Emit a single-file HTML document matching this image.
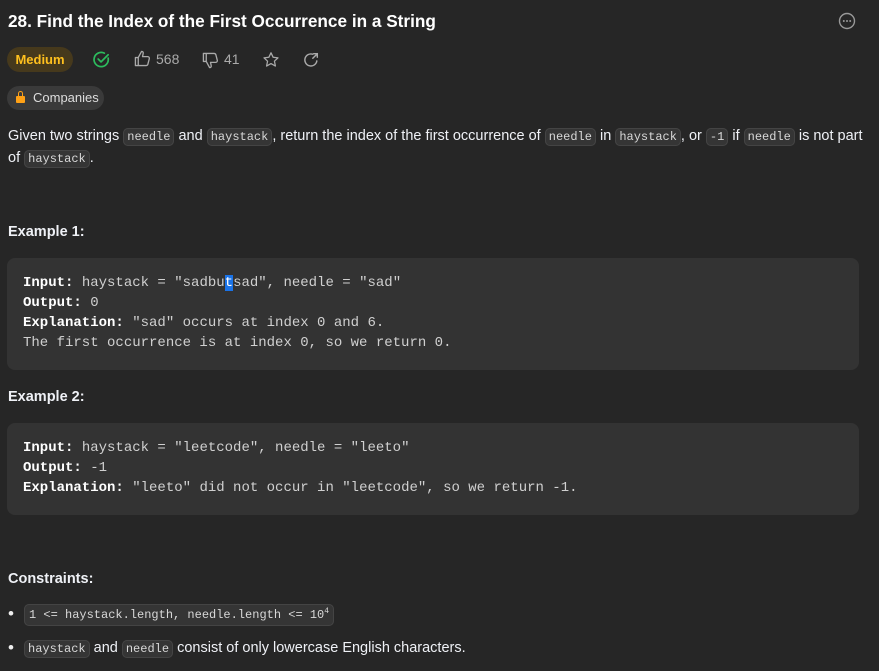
<!DOCTYPE html>
<html><head><meta charset="utf-8"><style>
body{margin:0;background:#262626;width:879px;height:671px;overflow:hidden;font-family:"Liberation Sans",sans-serif;color:#eff1f6;}
.t{position:absolute;left:8px;top:11px;font-size:17.2px;font-weight:bold;color:#fff}
.c{font-family:"Liberation Mono",monospace;font-size:12px;background:#353535;border:1px solid #444;border-radius:5px;padding:1px 3px;color:#d8d8d8}
p{position:absolute;left:8px;margin:0;font-size:14.5px;line-height:21px;width:865px}
.h{position:absolute;left:8px;font-size:14.5px;font-weight:bold}
.pre{position:absolute;left:7px;width:852px;background:#333333;border-radius:8px;font-family:"Liberation Mono",monospace;font-size:14px;line-height:20px;color:#d0d0d0;box-sizing:border-box;padding:15px 16px;white-space:pre}
.pre b{color:#fff}
.sel{background:#1a73e8;color:#fff}
li{position:absolute;left:8px;font-size:14.5px;list-style:none}
li:before{content:"•";position:absolute;left:0;color:#eee;font-size:17px;top:-2px}
</style></head><body>
<div class="t">28. Find the Index of the First Occurrence in a String</div>
<svg style="position:absolute;left:838px;top:12px" width="18" height="18" viewBox="0 0 18 18"><circle cx="9" cy="9" r="7.5" fill="none" stroke="#999" stroke-width="1.4"/><circle cx="5.8" cy="9" r="1" fill="#999"/><circle cx="9" cy="9" r="1" fill="#999"/><circle cx="12.2" cy="9" r="1" fill="#999"/></svg>
<div style="position:absolute;left:7px;top:47px;width:66px;height:25px;border-radius:13px;background:#46391c;color:#ffc01e;font-size:13px;font-weight:600;text-align:center;line-height:25px">Medium</div>
<svg style="position:absolute;left:92px;top:50px" width="19" height="19" viewBox="0 0 20 20"><path d="M17 8.5A7.5 7.5 0 1 1 13 3.3" fill="none" stroke="#2cbb5d" stroke-width="1.8" stroke-linecap="round"/><path d="M6.5 9.5l3 3L17 5" fill="none" stroke="#2cbb5d" stroke-width="1.8" stroke-linecap="round" stroke-linejoin="round"/></svg>
<svg style="position:absolute;left:134px;top:50px" width="17" height="17" viewBox="0 0 18 18"><path d="M1.5 8h3v8.5h-3zM4.5 8l3.5-6.5c1.5 0 2 1 1.7 2.3L9 7h5.5c1.2 0 2 1 1.7 2.2l-1.5 5.8c-.3 1-1 1.5-2 1.5H4.5" fill="none" stroke="#aaa" stroke-width="1.4" stroke-linejoin="round"/></svg>
<div style="position:absolute;left:156px;top:51px;font-size:14px;color:#aaa">568</div>
<svg style="position:absolute;left:202px;top:52px" width="17" height="17" viewBox="0 0 18 18"><path d="M1.5 1.5h3V10h-3zM4.5 10l3.5 6.5c1.5 0 2-1 1.7-2.3L9 11h5.5c1.2 0 2-1 1.7-2.2L14.7 3c-.3-1-1-1.5-2-1.5H4.5" fill="none" stroke="#aaa" stroke-width="1.4" stroke-linejoin="round"/></svg>
<div style="position:absolute;left:224px;top:51px;font-size:14px;color:#aaa">41</div>
<svg style="position:absolute;left:262px;top:51px" width="18" height="18" viewBox="0 0 20 20"><path d="M10 2l2.4 5 5.4.6-4 3.7 1.1 5.4L10 14l-4.9 2.7 1.1-5.4-4-3.7 5.4-.6z" fill="none" stroke="#aaa" stroke-width="1.4" stroke-linejoin="round"/></svg>
<svg style="position:absolute;left:302px;top:51px" width="18" height="18" viewBox="0 0 20 20"><path d="M16.5 11A6.7 6.7 0 1 1 12 3.6" fill="none" stroke="#aaa" stroke-width="1.6" stroke-linecap="round"/><path d="M12 8l5-5M13 3h4v4" fill="none" stroke="#aaa" stroke-width="1.6" stroke-linecap="round"/></svg>
<div style="position:absolute;left:7px;top:86px;width:97px;height:24px;border-radius:12px;background:#3a3a3a;font-size:13px;color:#ddd;line-height:24px"><span style="position:absolute;left:9px;width:9px;height:7px;background:#ffa116;border-radius:1px;top:10px"></span><span style="position:absolute;left:11px;top:5px;width:5px;height:6px;border:1.5px solid #ffa116;border-bottom:none;border-radius:4px 4px 0 0;box-sizing:border-box"></span><span style="position:absolute;left:26px">Companies</span></div>
<p style="top:126px">Given two strings <span class="c">needle</span> and <span class="c">haystack</span>, return the index of the first occurrence of <span class="c">needle</span> in <span class="c">haystack</span>, or <span class="c">-1</span> if <span class="c">needle</span> is not part of <span class="c">haystack</span>.</p>
<div class="h" style="top:224px">Example 1:</div>
<div class="pre" style="top:258px;height:112px"><b>Input:</b> haystack = "sadbu<span class="sel">t</span>sad", needle = "sad"
<b>Output:</b> 0
<b>Explanation:</b> "sad" occurs at index 0 and 6.
The first occurrence is at index 0, so we return 0.</div>
<div class="h" style="top:389px">Example 2:</div>
<div class="pre" style="top:423px;height:92px"><b>Input:</b> haystack = "leetcode", needle = "leeto"
<b>Output:</b> -1
<b>Explanation:</b> "leeto" did not occur in "leetcode", so we return -1.</div>
<div class="h" style="top:571px">Constraints:</div>
<li style="top:606px"><span style="margin-left:16px;padding:3px 4px" class="c">1 &lt;= haystack.length, needle.length &lt;= 10<sup style="font-size:8px">4</sup></span></li>
<li style="top:640px"><span style="margin-left:16px" class="c">haystack</span> and <span class="c">needle</span> consist of only lowercase English characters.</li>
</body></html>
